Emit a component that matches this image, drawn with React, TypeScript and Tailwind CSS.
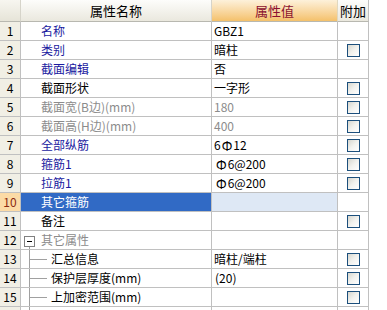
import React from "react";

type Row = {
  n: number;
  name: string;
  nameColor: string;
  value?: React.ReactNode;
  valueColor?: string;
  valuePad?: string;
  cb: boolean;
  selected?: boolean;
  kind?: "group" | "child";
};

const Bar = () => <span className="text-[13px] mx-[1px]">Ф</span>;

const rows: Row[] = [
  { n: 1, name: "名称", nameColor: "text-[#1a1aa0]", value: "GBZ1", cb: false },
  { n: 2, name: "类别", nameColor: "text-[#1a1aa0]", value: "暗柱", cb: true },
  { n: 3, name: "截面编辑", nameColor: "text-[#1a1aa0]", value: "否", cb: false },
  { n: 4, name: "截面形状", nameColor: "text-black", value: "一字形", cb: true },
  { n: 5, name: "截面宽(B边)(mm)", nameColor: "text-[#8c8c8c]", value: "180", valueColor: "text-[#8c8c8c]", cb: true },
  { n: 6, name: "截面高(H边)(mm)", nameColor: "text-[#8c8c8c]", value: "400", valueColor: "text-[#8c8c8c]", cb: true },
  { n: 7, name: "全部纵筋", nameColor: "text-[#1a1aa0]", value: <>6<Bar />12</>, cb: true },
  { n: 8, name: "箍筋1", nameColor: "text-[#1a1aa0]", value: <><Bar />6@200</>, valuePad: "pl-[3px]", cb: true },
  { n: 9, name: "拉筋1", nameColor: "text-[#1a1aa0]", value: <><Bar />6@200</>, valuePad: "pl-[3px]", cb: true },
  { n: 10, name: "其它箍筋", nameColor: "text-white", cb: false, selected: true },
  { n: 11, name: "备注", nameColor: "text-black", cb: true },
  { n: 12, name: "其它属性", nameColor: "text-[#8c8c8c]", cb: false, kind: "group" },
  { n: 13, name: "汇总信息", nameColor: "text-black", value: "暗柱/端柱", cb: true, kind: "child" },
  { n: 14, name: "保护层厚度(mm)", nameColor: "text-black", value: "(20)", valuePad: "pl-[3px]", cb: true, kind: "child" },
  { n: 15, name: "上加密范围(mm)", nameColor: "text-black", cb: true, kind: "child" },
];

function Checkbox() {
  return (
    <div className="w-[13px] h-[13px] border border-[#1c4f7c] bg-linear-to-br from-[#d6d6ce] via-[#f2f2ee] to-white" />
  );
}

function TreeChild({ children }: { children?: React.ReactNode }) {
  return (
    <div className="flex h-full items-stretch pl-[8px]">
      <div className="w-px bg-[#a0a0a0]" />
      <div className="flex items-center">
        <div className="w-[17px] h-px bg-[#a0a0a0]" />
      </div>
      <div className="ml-[4px] flex items-center">{children}</div>
    </div>
  );
}

function GridRow({ r }: { r: Row }) {
  const cell = "shrink-0 border-r border-b border-[#c0c0c0] h-full";
  let nameContent: React.ReactNode;
  if (r.kind === "group") {
    nameContent = (
      <div className="flex h-full pl-[3px]">
        <div className="flex flex-col items-center pt-[5px]">
          <div className="w-[11px] h-[11px] border border-[#808080] bg-white flex items-center justify-center">
            <div className="w-[5px] h-px bg-black" />
          </div>
          <div className="w-px flex-1 bg-[#a0a0a0]" />
        </div>
        <div className={`ml-[6px] flex items-center ${r.nameColor}`}>{r.name}</div>
      </div>
    );
  } else if (r.kind === "child") {
    nameContent = (
      <TreeChild>
        <span className={r.nameColor}>{r.name}</span>
      </TreeChild>
    );
  } else {
    nameContent = <div className={`flex h-full items-center pl-[20px] ${r.nameColor}`}>{r.name}</div>;
  }
  return (
    <div className="flex h-[19px] w-[369px]">
      <div
        className={`${cell} w-[21px] flex items-center justify-center ${
          r.selected ? "bg-[#fcdba6] text-[#8a2a10]" : "bg-[#f1efe5] text-black"
        }`}
      >
        {r.n}
      </div>
      <div className={`${cell} w-[191px] ${r.selected ? "bg-[#316ac5]" : "bg-white"}`}>{nameContent}</div>
      <div
        className={`${cell} w-[126px] flex items-center ${r.valuePad ?? "pl-[2px]"} ${
          r.selected ? "bg-[#dee8f5]" : "bg-white"
        } ${r.valueColor ?? "text-black"}`}
      >
        {r.value}
      </div>
      <div className={`${cell} w-[31px] flex items-center justify-center bg-white`}>{r.cb && <Checkbox />}</div>
    </div>
  );
}

export default function App() {
  return (
    <div className="w-[387px] h-[310px] overflow-hidden bg-white font-['Noto_Sans_CJK_SC','Noto_Sans',sans-serif] text-[12px] leading-none">
      <div className="flex h-[22px] w-[369px]">
        <div className="shrink-0 w-[21px] h-full border-r border-r-[#d6d4ca] border-b border-b-[#b8b8b0] bg-linear-to-b from-[#f7f6f0] to-[#e6e4d8]" />
        <div className="shrink-0 w-[191px] h-full border-r border-r-[#d6d4ca] border-b border-b-[#b8b8b0] bg-linear-to-b from-[#fdfdfb] to-[#eae8de] flex items-center justify-center text-black text-[13px]">
          属性名称
        </div>
        <div className="shrink-0 w-[126px] h-full border-r border-r-[#e0d8c0] border-b border-b-[#b8b8b0] bg-linear-to-b from-[#fdf1da] to-[#f4c16a] flex items-center justify-center text-[#8b1030] text-[13px]">
          属性值
        </div>
        <div className="shrink-0 w-[31px] h-full border-r border-r-[#c0c0c0] border-b border-b-[#b8b8b0] bg-linear-to-b from-[#fdfdfb] to-[#eae8de] flex items-center justify-center text-black text-[13px]">
          附加
        </div>
      </div>
      {rows.map((r) => (
        <GridRow key={r.n} r={r} />
      ))}
      <div className="flex h-[19px] w-[369px]">
        <div className="shrink-0 w-[21px] h-full border-r border-[#c0c0c0] bg-[#f1efe5]" />
        <div className="shrink-0 w-[191px] h-full border-r border-[#c0c0c0]">
          <div className="h-full pl-[8px] flex">
            <div className="w-px bg-[#a0a0a0]" />
          </div>
        </div>
        <div className="shrink-0 w-[126px] h-full border-r border-[#c0c0c0]" />
        <div className="shrink-0 w-[31px] h-full border-r border-[#c0c0c0]" />
      </div>
    </div>
  );
}
